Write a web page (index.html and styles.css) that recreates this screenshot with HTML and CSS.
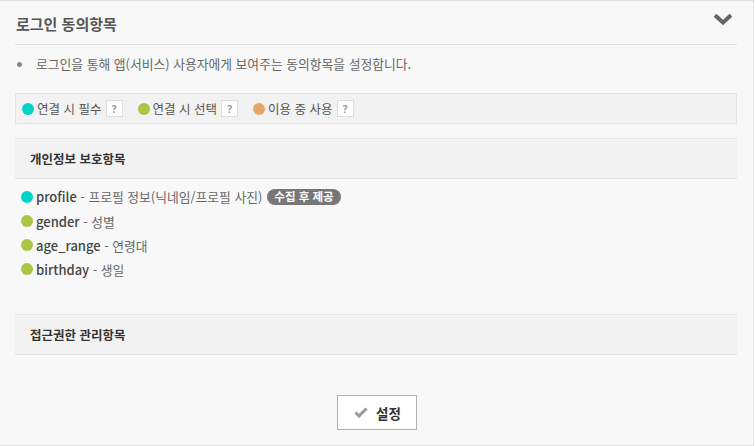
FILE: index.html
```html
<!DOCTYPE html>
<html lang="ko">
<head>
<meta charset="utf-8">
<link rel="stylesheet" href="styles.css">
</head>
<body>
<div class="panel">
  <div class="header">
    <h2 class="title">로그인 동의항목</h2>
    <svg class="chevron" width="18" height="12" viewBox="0 0 18 12"><path d="M2.5 2.5 L9 8.5 L15.5 2.5" fill="none" stroke="#666" stroke-width="4" stroke-linecap="square"/></svg>
  </div>
  <ul class="desc">
    <li>로그인을 통해 앱(서비스) 사용자에게 보여주는 동의항목을 설정합니다.</li>
  </ul>
  <div class="legend">
    <span class="legend-item"><i class="dot cyan"></i>연결 시 필수<span class="q">?</span></span>
    <span class="legend-item"><i class="dot green"></i>연결 시 선택<span class="q">?</span></span>
    <span class="legend-item"><i class="dot orange"></i>이용 중 사용<span class="q">?</span></span>
  </div>
  <div class="section-head">개인정보 보호항목</div>
  <ul class="items">
    <li class="first"><i class="dot cyan"></i><b>profile</b>&nbsp;- 프로필 정보(닉네임/프로필 사진)<span class="badge">수집 후 제공</span></li>
    <li><i class="dot green"></i><b>gender</b>&nbsp;- 성별</li>
    <li><i class="dot green"></i><b>age_range</b>&nbsp;- 연령대</li>
    <li><i class="dot green"></i><b>birthday</b>&nbsp;- 생일</li>
  </ul>
  <div class="section-head">접근권한 관리항목</div>
  <div class="actions">
    <button class="btn"><svg width="14" height="11" viewBox="0 0 14 11"><path d="M1.5 5.5 L5 9 L12.5 1.5" fill="none" stroke="#999" stroke-width="3"/></svg>설정</button>
  </div>
</div>
</body>
</html>
```
FILE: styles.css
```css
* { box-sizing: border-box; }
html, body { margin: 0; padding: 0; background: #fff; }
body {
  font-family: "Noto Sans CJK KR", "Noto Sans", sans-serif;
  color: #666;
  width: 756px;
  height: 446px;
  overflow: hidden;
}
.panel {
  width: 754px;
  height: 446px;
  background: #f8f8f8;
  border-top: 1px solid #dcdcdc;
  border-bottom: 1px solid #dcdcdc;
  border-right: 1px solid #e4e4e4;
  padding: 0 16px 0 15px;
  display: flex;
  flex-direction: column;
}
.header {
  height: 44px;
  border-bottom: 1px solid #e2e2e2;
  display: flex;
  align-items: center;
  justify-content: space-between;
  padding: 0 5px 0 1px;
}
.title {
  margin: 0;
  font-size: 15px;
  font-weight: 700;
  color: #555;
  line-height: 20px;
  padding-top: 2px;
}
.chevron { margin-top: -5px; }
.desc {
  list-style: none;
  margin: 0;
  padding: 9px 0 0 1px;
  height: 48px;
  font-size: 12.8px;
  line-height: 19px;
  color: #666;
}
.desc li { position: relative; padding-left: 20px; }
.desc li::before {
  content: "";
  position: absolute;
  left: 1px;
  top: 8px;
  width: 5px;
  height: 5px;
  border-radius: 50%;
  background: #888;
}
.legend {
  height: 31px;
  background: #f2f2f2;
  border: 1px solid #e4e4e4;
  display: flex;
  align-items: center;
  padding-left: 6px;
  gap: 15px;
  font-size: 12.5px;
  color: #555;
}
.legend-item { display: flex; align-items: center; }
.legend .dot { margin-right: 3px; }
.q {
  display: inline-flex;
  align-items: center;
  justify-content: center;
  width: 17px;
  height: 17px;
  margin-left: 4px;
  background: #fff;
  border: 1px solid #ddd;
  color: #999;
  font-size: 10px;
  font-weight: 700;
  font-family: "Noto Sans", sans-serif;
}
.dot {
  display: inline-block;
  width: 12px;
  height: 12px;
  border-radius: 50%;
  flex: none;
}
.cyan { background: #00d3c8; }
.green { background: #aac444; }
.orange { background: #e6a66a; }
.section-head {
  margin-top: 14px;
  height: 41px;
  background: #f2f2f2;
  border-top: 1px solid #e4e4e4;
  border-bottom: 1px solid #e4e4e4;
  display: flex;
  align-items: center;
  padding-left: 15px;
  font-size: 12.5px;
  font-weight: 700;
  color: #333;
}
.items {
  list-style: none;
  margin: 0;
  padding: 5px 0 0 6px;
  height: 121px;
  font-size: 12.8px;
  color: #666;
}
.items li {
  display: flex;
  align-items: center;
  height: 24px;
}
.items li.first { height: 25px; }
.items .dot { margin-right: 3px; }
.items b {
  font-size: 13px;
  font-weight: 500;
  color: #444;
}
.badge {
  display: inline-flex;
  align-items: center;
  margin-left: 5px;
  height: 16px;
  padding: 0 7px 1px;
  border-radius: 8px;
  background: #777;
  color: #fff;
  font-size: 11.5px;
  font-weight: 700;
}
.actions {
  display: flex;
  justify-content: center;
  padding-top: 40px;
  padding-left: 1px;
}
.btn {
  width: 80px;
  height: 35px;
  background: #fff;
  border: 1px solid #b0b0b0;
  display: flex;
  align-items: center;
  justify-content: center;
  gap: 8px;
  font-family: "Noto Sans CJK KR", sans-serif;
  font-size: 13.5px;
  font-weight: 700;
  color: #333;
  padding: 0 0 0 2px;
}
```
